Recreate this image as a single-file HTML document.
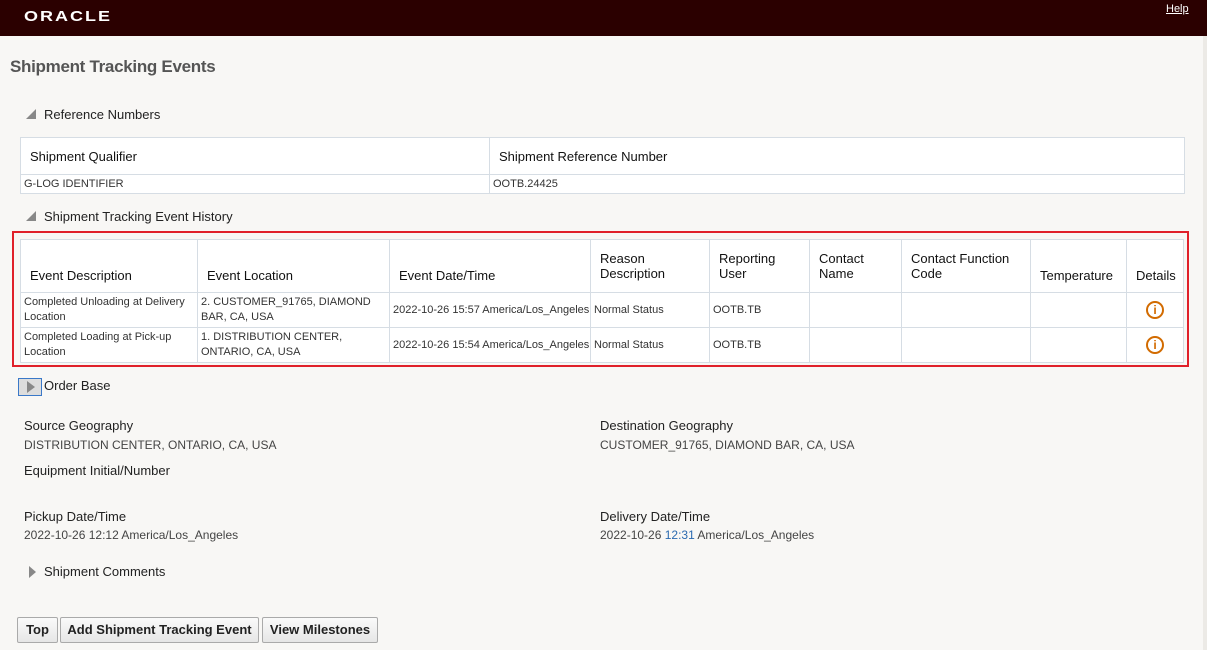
<!DOCTYPE html>
<html><head><style>
body{margin:0;width:1207px;height:650px;background:#f8f7f5;font-family:"Liberation Sans",sans-serif;color:#222;position:relative;overflow:hidden}
.a{position:absolute;white-space:nowrap}
.hd{left:0;top:0;width:1207px;height:36px;background:#2b0000}
table{border-collapse:collapse;background:#fff;position:absolute;table-layout:fixed}
td,th{border:1px solid #d6dde4;padding:0 3px;font-weight:normal;text-align:left;vertical-align:middle}
th{font-size:13px;color:#111;padding-left:9px}
td{font-size:11px;color:#333;line-height:15px}
.sec{font-size:13px;color:#222}
.tri{display:inline-block;width:0;height:0;border-left:10px solid transparent;border-bottom:10px solid #888;margin-right:8px}
.lbl{font-size:13px;color:#222}
.val{font-size:12px;color:#444}
.btn{top:617px;height:24px;border:1px solid #aaa;background:linear-gradient(#fafafa,#e6e6e6);font-size:13px;font-weight:bold;line-height:24px;text-align:center;color:#222;border-radius:2px}
.ic{display:inline-block;width:14px;height:14px;border:2px solid #d26b00;border-radius:50%;color:#d26b00;font-weight:bold;font-size:12px;line-height:14px;text-align:center}
</style></head><body>
<div class="a hd"></div>
<div class="a" style="left:24px;top:8px;color:#fff;font-size:18px;font-weight:bold;letter-spacing:2px;transform:scaleY(0.8);transform-origin:top left">ORACLE</div>
<div class="a" style="left:1166px;top:3px;color:#fff;font-size:11px;text-decoration:underline">Help</div>
<div class="a" style="left:1203px;top:36px;width:4px;height:614px;background:#eceae6"></div>
<div class="a" style="left:10px;top:57px;font-size:17px;font-weight:bold;color:#555;letter-spacing:-0.3px">Shipment Tracking Events</div>
<div class="a sec" style="left:26px;top:107px"><span class="tri"></span>Reference Numbers</div>
<table style="left:20px;top:137px;width:1165px">
<col style="width:469px"><col>
<tr style="height:37px"><th>Shipment Qualifier</th><th>Shipment Reference Number</th></tr>
<tr style="height:19px"><td>G-LOG IDENTIFIER</td><td>OOTB.24425</td></tr>
</table>
<div class="a sec" style="left:26px;top:209px"><span class="tri"></span>Shipment Tracking Event History</div>
<div class="a" style="left:12px;top:231px;width:1173px;height:132px;border:2px solid #e0202a"></div>
<table style="left:20px;top:239px;width:1164px">
<col style="width:177px"><col style="width:192px"><col style="width:201px"><col style="width:119px"><col style="width:100px"><col style="width:92px"><col style="width:129px"><col style="width:96px"><col>
<tr style="height:53px"><th style="vertical-align:bottom;padding-bottom:9px">Event Description</th><th style="vertical-align:bottom;padding-bottom:9px">Event Location</th><th style="vertical-align:bottom;padding-bottom:9px">Event Date/Time</th><th>Reason<br>Description</th><th>Reporting<br>User</th><th>Contact<br>Name</th><th>Contact Function<br>Code</th><th style="vertical-align:bottom;padding-bottom:9px">Temperature</th><th style="vertical-align:bottom;padding-bottom:9px">Details</th></tr>
<tr style="height:35px"><td>Completed Unloading at Delivery Location</td><td>2. CUSTOMER_91765, DIAMOND BAR, CA, USA</td><td style="white-space:nowrap">2022-10-26 15:57 America/Los_Angeles</td><td>Normal Status</td><td>OOTB.TB</td><td></td><td></td><td></td><td style="text-align:center"><span class="ic">i</span></td></tr>
<tr style="height:35px"><td>Completed Loading at Pick-up Location</td><td>1. DISTRIBUTION CENTER, ONTARIO, CA, USA</td><td style="white-space:nowrap">2022-10-26 15:54 America/Los_Angeles</td><td>Normal Status</td><td>OOTB.TB</td><td></td><td></td><td></td><td style="text-align:center"><span class="ic">i</span></td></tr>
</table>
<div class="a" style="left:18px;top:378px;width:22px;height:16px;border:1px solid #3a78c8;background:#ddd"></div>
<div class="a" style="left:27px;top:381px;width:0;height:0;border-top:6px solid transparent;border-bottom:6px solid transparent;border-left:8px solid #888"></div>
<div class="a sec" style="left:44px;top:378px">Order Base</div>
<div class="a lbl" style="left:24px;top:418px">Source Geography</div>
<div class="a val" style="left:24px;top:438px">DISTRIBUTION CENTER, ONTARIO, CA, USA</div>
<div class="a lbl" style="left:24px;top:463px">Equipment Initial/Number</div>
<div class="a lbl" style="left:24px;top:509px">Pickup Date/Time</div>
<div class="a val" style="left:24px;top:528px">2022-10-26 12:12 America/Los_Angeles</div>
<div class="a lbl" style="left:600px;top:418px">Destination Geography</div>
<div class="a val" style="left:600px;top:438px">CUSTOMER_91765, DIAMOND BAR, CA, USA</div>
<div class="a lbl" style="left:600px;top:509px">Delivery Date/Time</div>
<div class="a val" style="left:600px;top:528px">2022-10-26 <span style="color:#2a6ab0">12:31</span> America/Los_Angeles</div>
<div class="a" style="left:29px;top:566px;width:0;height:0;border-top:6px solid transparent;border-bottom:6px solid transparent;border-left:7px solid #888"></div>
<div class="a sec" style="left:44px;top:564px">Shipment Comments</div>
<div class="a btn" style="left:17px;width:39px">Top</div>
<div class="a btn" style="left:60px;width:197px">Add Shipment Tracking Event</div>
<div class="a btn" style="left:262px;width:114px">View Milestones</div>
</body></html>
